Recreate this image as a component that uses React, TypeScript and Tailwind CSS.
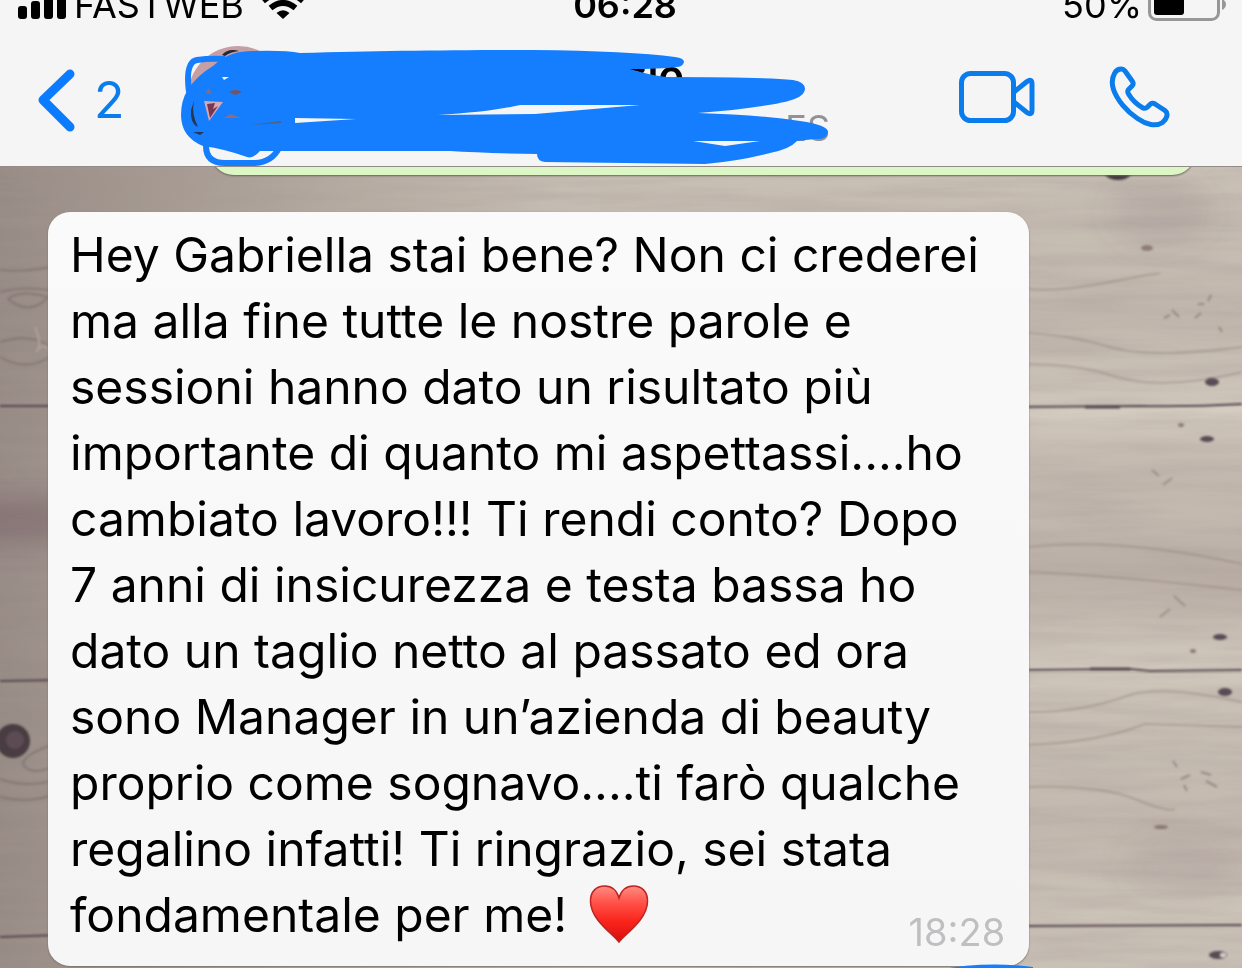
import React from "react";

const messageLines = [
  "Hey Gabriella stai bene? Non ci crederei",
  "ma alla fine tutte le nostre parole e",
  "sessioni hanno dato un risultato più",
  "importante di quanto mi aspettassi....ho",
  "cambiato lavoro!!! Ti rendi conto? Dopo",
  "7 anni di insicurezza e testa bassa ho",
  "dato un taglio netto al passato ed ora",
  "sono Manager in un’azienda di beauty",
  "proprio come sognavo....ti farò qualche",
  "regalino infatti! Ti ringrazio, sei stata",
  "fondamentale per me!",
];

function SignalIcon() {
  return (
    <svg width="48" height="36" viewBox="0 0 48 36" aria-hidden="true">
      <rect x="0" y="23" width="9" height="13" rx="3" />
      <rect x="13" y="18" width="9" height="18" rx="3" />
      <rect x="26" y="12" width="9" height="24" rx="3" />
      <rect x="39" y="6" width="9" height="30" rx="3" />
    </svg>
  );
}

function WifiIcon() {
  return (
    <svg width="44" height="32" viewBox="0 0 44 32" aria-hidden="true">
      <path d="M22 32 L15.500 26 Q22 20.500 28.500 26 Z" />
      <path d="M9.500 21 Q22 11 34.500 21" fill="none" stroke="#000" strokeWidth="6" />
      <path d="M2 14 Q22 -3 42 14" fill="none" stroke="#000" strokeWidth="6" />
    </svg>
  );
}

function BatteryIcon() {
  return (
    <svg width="78" height="34" viewBox="0 0 78 34" aria-hidden="true">
      <rect x="1.5" y="1.5" width="69" height="31" rx="7" fill="none" stroke="#97979a" strokeWidth="3" />
      <rect x="6" y="6" width="30" height="22" rx="3" />
      <path d="M74 12 Q78 14 78 17 Q78 21 74 23 Z" fill="#97979a" />
    </svg>
  );
}

function VideoIcon() {
  return (
    <svg width="78" height="54" viewBox="0 0 78 54" fill="none" stroke="#0b7cec" strokeWidth="5" strokeLinejoin="round" aria-hidden="true">
      <rect x="3.500" y="3.500" width="52" height="47" rx="9" />
      <path d="M56 22 L69 11.500 Q74 8 74 14 V40 Q74 46 69 42.500 L56 32" />
    </svg>
  );
}

function PhoneIcon() {
  return (
    <svg width="62" height="62" viewBox="0 0 62 62" fill="none" stroke="#0b7cec" strokeWidth="5" strokeLinejoin="round" aria-hidden="true">
      <path d="M5.500 7.500 C7.500 3.500 13 1 16 5 L23.500 15.500 Q25 18 23 20 L19.500 23.500 Q18 25.500 19.500 28 Q25 37 34 42 Q36.500 43 38.500 41 L41.500 38 Q43.500 36.500 46 38 L56 44.500 C60 47.500 57.500 53.500 53.500 56.500 C47 61 37 58.500 28.500 52.500 C18 45.500 8 34 4.500 23.500 C2.500 17.500 3 12 5.500 7.500 Z" />
    </svg>
  );
}

function HeartIcon() {
  return (
    <svg className="ml-2 mt-[3px] inline-block align-top" width="60" height="60" viewBox="0 0 60 60" role="img" aria-label="cuore rosso">
      <defs>
        <linearGradient id="heart" x1="0" y1="0" x2="0" y2="1">
          <stop offset="0" stopColor="#ff8d84" />
          <stop offset="0.3" stopColor="#ff5148" />
          <stop offset="0.62" stopColor="#fa261d" />
          <stop offset="1" stopColor="#d90d0b" />
        </linearGradient>
      </defs>
      <path d="M30 57 C24 49 2 35 1.500 17 C1 6 8 1 15.500 1 C23 1 28 6 30 13 C32 6 37 1 44.500 1 C52 1 59 6 58.500 17 C58 35 36 49 30 57 Z" fill="url(#heart)" stroke="#bd2422" strokeWidth="1.500" />
    </svg>
  );
}

function HeaderScribble() {
  return (
    <svg className="pointer-events-none absolute left-0 top-0 z-20" width="860" height="170" viewBox="0 0 860 170" aria-hidden="true">
      <path
        fill="#147efe"
        d="M213 66 C225 54 240 51 252 51 Q285 50 300 53 C380 51 440 50 533 50 Q630 51 675 57 Q684 58 684 62 Q683 67 676 67 Q660 69 630 69 Q645 74 666 77 Q760 77 793 80 Q805 82 805 89 C804 98 790 101 775 104 Q740 110 698 113 Q760 115 800 121 Q828 125 828 132 Q827 140 815 139 L797 141 Q790 149 770 153 Q740 161 705 164 L545 162 Q537 161 537 154 Q480 153 450 151 L260 151 Q253 159 247 157 Q225 149 203 146 Q181 137 181 115 Q181 101 187 91 Q196 76 213 66 Z"
      />
      <path d="M189 92 Q185 62 197 60 Q210 58 225 59 M206 146 Q206 163 225 163 H255 Q272 162 279 148" fill="none" stroke="#147efe" strokeWidth="6" />
      <g fill="#f5f5f6">
        <path d="M438 115 Q490 112 520 105 L640 105 L535 114 Z" />
        <path d="M295 118 L356 119 L295 123 Z" />
        <path d="M693 141 L760 141 L725 146 Z" />
        <path d="M222 77 L229 77 L224 80 Z" />
      </g>
      <path d="M204 101 L223 102 L209 121 Z" fill="#d5a8b6" />
      <path d="M207 104 L215 103 L213 109 L218 106 L210 118 Z" fill="#79364f" />
      <path d="M194 101 Q191 113 198 127 Q190 124 191 110 Z" fill="#263755" />
      <path d="M229 92 Q236 88 242 92 L235 95 Z" fill="#765464" />
      <path d="M224 118 L230 114 L241 118 Z" fill="#946a83" />
      <path d="M206 93 L208 88 L212 94 Z" fill="#866c89" />
      <path d="M222 55 Q228 48 239 51 Q230 52 225 56 Z" fill="#252635" />
      <path d="M250 125 L281 121 L281 123 Z" fill="#516184" />
      <path d="M193 132 L204 132 L200 135 Z" fill="#263755" />
    </svg>
  );
}

function WoodWallpaper() {
  return (
    <svg className="absolute inset-0 h-full w-full" viewBox="0 0 1242 801" preserveAspectRatio="none" aria-hidden="true">
      <defs>
        <linearGradient id="wood" x1="0" y1="0" x2="1" y2="0">
          <stop offset="0" stopColor="#978b85" />
          <stop offset="0.2" stopColor="#ada299" />
          <stop offset="0.45" stopColor="#c6bdb3" />
          <stop offset="0.85" stopColor="#c9c0b6" />
          <stop offset="1" stopColor="#c9c0b6" />
        </linearGradient>
        <linearGradient id="plank" x1="0" y1="0" x2="0" y2="1">
          <stop offset="0" stopColor="#e8e0d2" stopOpacity="0.45" />
          <stop offset="0.4" stopColor="#8f7e78" stopOpacity="0.1" />
          <stop offset="0.6" stopColor="#8f7e78" stopOpacity="0.26" />
          <stop offset="1" stopColor="#e8e0d2" stopOpacity="0.38" />
        </linearGradient>
        <filter id="grain" x="0" y="0" width="100%" height="100%">
          <feTurbulence type="fractalNoise" baseFrequency="0.007 0.08" numOctaves="4" seed="8" />
          <feColorMatrix values="0 0 0 0 0.38  0 0 0 0 0.32  0 0 0 0 0.3  0.9 0 0 0 -0.3" />
        </filter>
        <filter id="soft" x="-30%" y="-30%" width="160%" height="160%">
          <feGaussianBlur stdDeviation="1" />
        </filter>
        <filter id="haze" x="-30%" y="-60%" width="160%" height="220%">
          <feGaussianBlur stdDeviation="14" />
        </filter>
      </defs>
      <rect width="1242" height="801" fill="url(#wood)" />
      <rect x="600" y="239" width="642" height="266" fill="url(#plank)" />
      <rect x="600" y="-20" width="642" height="258" fill="url(#plank)" opacity="0.5" />
      <rect x="600" y="507" width="642" height="252" fill="url(#plank)" opacity="0.5" />
      <rect width="1242" height="801" filter="url(#grain)" opacity="0.6" />
      <g filter="url(#haze)" fill="#79636a">
        <rect x="-30" y="332" width="100" height="42" opacity="0.6" />
        <ellipse cx="1160" cy="45" rx="50" ry="34" opacity="0.15" />
        <ellipse cx="1180" cy="700" rx="56" ry="28" opacity="0.12" />
      </g>
      <g filter="url(#soft)" fill="none" stroke="#56474f">
        <path d="M0 239 L60 239 M0 514 L60 513 M0 770 L60 768" strokeWidth="2" />
        <path d="M1020 240 L1140 239 Q1190 240 1242 237" strokeWidth="2" />
        <path d="M1020 503 L1130 502 L1150 504 L1242 503 M1020 759 L1242 758" strokeWidth="2" />
        <path d="M1085 240 H1120 M1090 502 H1130" strokeWidth="3" />
        <g stroke="#897a75" strokeWidth="2" opacity="0.4">
          <path d="M1028 197 Q1080 198 1110 208 Q1160 225 1242 205" />
          <path d="M1028 166 Q1070 168 1110 180 T1242 180" />
          <path d="M1028 122 Q1060 125 1110 115 T1160 107" />
          <path d="M1028 545 Q1080 546 1130 528 Q1165 518 1242 535" />
          <path d="M1028 578 Q1100 575 1145 557 L1242 560" />
          <path d="M1028 620 Q1100 618 1135 632 T1175 642" />
          <path d="M1028 405 Q1110 408 1242 423" />
          <path d="M1028 380 Q1120 370 1242 397" />
        </g>
        <g stroke="#756565" strokeWidth="2" opacity="0.5">
          <path d="M0 103 Q25 106 60 98 M0 125 Q25 118 60 125 M8 132 Q20 122 48 130 Q30 150 8 132" />
          <path d="M0 190 Q25 205 50 190 M0 175 Q28 166 48 178 M60 575 Q15 590 25 600 Q38 610 60 595" />
          <path d="M0 612 Q25 622 60 612 M0 630 Q30 638 60 625" />
          <path d="M35 160 Q43 178 36 185 Q44 175 48 183" stroke="#c0b2ac" />
        </g>
        <g stroke="#7e6e6c" strokeWidth="2">
          <path d="M1172 143 L1179 150 M1198 137 L1204 137 M1208 134 L1211 128 M1219 160 L1222 165 M1170 148 L1164 151 M1195 151 L1201 146" opacity="0.6" />
          <path d="M1173 594 L1177 600 M1181 612 L1190 608 M1184 618 L1187 624 M1206 614 L1217 620 M1201 605 L1211 608" opacity="0.6" />
          <path d="M1152 303 L1159 309 M1163 318 L1172 311 M1174 429 L1185 439 M1160 450 L1170 442" opacity="0.5" />
        </g>
      </g>
      <g filter="url(#soft)">
        <ellipse cx="13" cy="574" rx="17" ry="17" fill="#4a3c43" />
        <ellipse cx="15" cy="573" rx="9" ry="9" fill="#5b4c53" />
        <ellipse cx="1118" cy="6" rx="13" ry="7" fill="#3f373b" />
        <ellipse cx="1212" cy="215" rx="7" ry="4" fill="#5a4c54" />
        <ellipse cx="1207" cy="272" rx="7" ry="3" fill="#594c55" />
        <ellipse cx="1220" cy="470" rx="7" ry="3" fill="#594c55" />
        <ellipse cx="1225" cy="525" rx="7" ry="4" fill="#594c55" />
        <ellipse cx="1218" cy="788" rx="9" ry="4" fill="#594c55" />
        <ellipse cx="1223" cy="788" rx="3" ry="2" fill="#dcd5d0" />
        <ellipse cx="1147" cy="81" rx="6" ry="3" fill="#8d7d78" />
        <ellipse cx="1161" cy="660" rx="7" ry="2" fill="#887873" />
        <ellipse cx="1181" cy="258" rx="3" ry="2" fill="#8d7d78" />
        <ellipse cx="1193" cy="484" rx="3" ry="2" fill="#8d7d78" />
      </g>
    </svg>
  );
}

export default function App() {
  return (
    <div className="flex min-h-screen flex-col overflow-hidden bg-[#f5f5f6] font-['Inter','Liberation_Sans',sans-serif] text-black">
      <header className="relative z-10 border-b border-[#918c88] bg-[#f5f5f6]">
        <div className="grid h-6 grid-cols-3 grid-rows-[24px] items-end text-[36px] leading-[38px]">
          <div className="flex items-end pl-[18px]">
            <span className="pb-[5px]"><SignalIcon /></span>
            <span className="ml-2">FASTWEB</span>
            <span className="ml-[17px] pb-[5px]"><WifiIcon /></span>
          </div>
          <time className="pl-2 text-center font-semibold">06:28</time>
          <div className="flex items-end justify-end pr-4">
            <span>50%</span>
            <span className="ml-[6px] pb-[3px]"><BatteryIcon /></span>
          </div>
        </div>
        <nav className="flex h-[142px] items-start pt-[22px]">
          <button type="button" aria-label="Indietro, 2 chat" className="ml-[38px] flex w-[150px] items-center pt-[22px] text-[50px] leading-[64px] text-[#0b7cec]">
            <svg width="38" height="64" viewBox="0 0 38 64" fill="none" stroke="#0b7cff" strokeWidth="9" strokeLinecap="round" strokeLinejoin="round" aria-hidden="true">
              <path d="M32 6 L5 32 L32 59" />
            </svg>
            <span className="ml-[18px]">2</span>
          </button>
          <div className="h-[100px] w-[100px] rounded-full bg-[#c69fa4]" />
          <div className="flex flex-1 flex-col pt-2">
            <h1 className="w-[396px] text-right text-[42px] font-semibold leading-[42px]">zio</h1>
            <p className="w-[542px] text-right text-[36px] leading-[64px] text-[#929296]">ES</p>
          </div>
          <div className="flex items-start gap-[73px] pr-[71px] pt-5">
            <button type="button" aria-label="Videochiamata" className="pt-[4px]"><VideoIcon /></button>
            <button type="button" aria-label="Chiamata"><PhoneIcon /></button>
          </div>
        </nav>
        <HeaderScribble />
      </header>
      <main className="relative flex-1">
        <WoodWallpaper />
        <div className="relative -mt-10 ml-[210px] mr-[46px] h-12 rounded-b-[24px] bg-[#dcf7c5] shadow-[0_1px_2px_#6b625c]" />
        <article className="relative mb-[2px] ml-12 mt-[37px] w-[79%] rounded-[22px] bg-gradient-to-b from-[#fafafa] via-[#f9f8f9] to-[#f6f6f6] pb-[18px] pl-[22px] pt-[10px] shadow-[0_1px_2px_#7b726c]">
          <p className="whitespace-nowrap text-[48px] leading-[66px]">
            {messageLines.map((line, index) => (
              <span key={line} className="block h-[66px]">
                {line}
                {index === messageLines.length - 1 && <> <HeartIcon /></>}
              </span>
            ))}
          </p>
          <time className="absolute bottom-3 right-6 text-[38px] leading-[44px] text-[#bfbfc2]">18:28</time>
          <svg className="absolute -bottom-1 -right-1" width="94" height="6" viewBox="0 0 94 6" aria-hidden="true">
            <path d="M0 6 Q45 -3 94 3 V6 Z" fill="#147efe" />
          </svg>
        </article>
      </main>
    </div>
  );
}
